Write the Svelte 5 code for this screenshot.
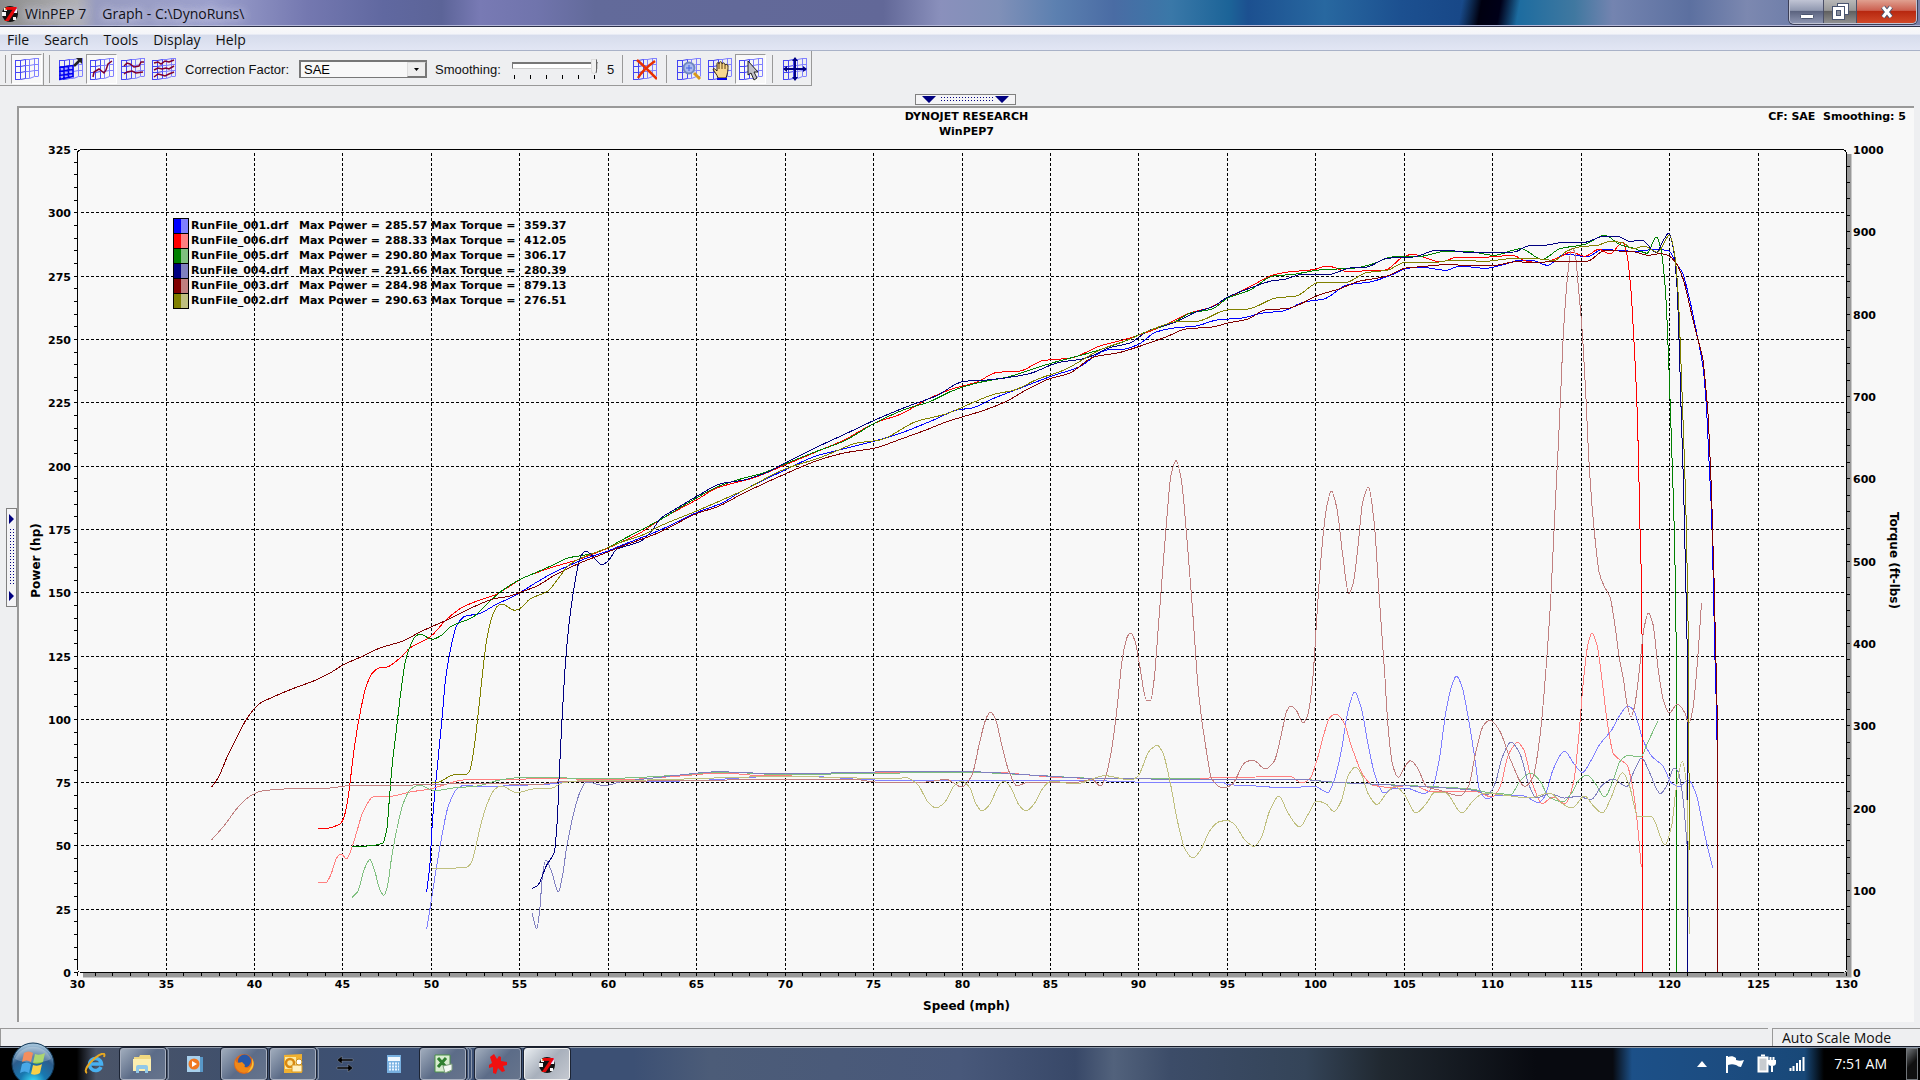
<script lang="ts">
  type Run = {
    file: string;
    power: string;
    torque: string;
    color: string;
    light: string;
    powerTrace: string;
    torqueTrace: string;
  };

  const menus = ['File', 'Search', 'Tools', 'Display', 'Help'];

  // traces are stored in the 1769 x 823 plot space that starts at 77,149
  const runs: Run[] = [
    {
      file: 'RunFile_001.drf',
      power: '285.57',
      torque: '359.37',
      color: '#0000ff',
      light: '#8080ff',
      powerTrace:
        '426.7,892 430,863 432.3,823 436.7,773 441.7,722 445.7,678 450,652 457,625 465.7,616 478,614 497,604 508,599 521,592 537,582 553,573 568,566 587,558 608,551 620,546 658,531 698,512 722,503 742,491 785,470 816,456 839,450 875,441 901,433 936,419 957,410 972,408 992,399 1018,389 1052,376 1079,367 1107,350 1125,349 1139,344 1156,332 1174,328 1196,326 1217,320 1242,318 1263,313 1283,311 1304,302 1324,299 1347,285 1370,282 1389,276 1406,268.7 1419,267 1446,270.3 1460,266 1485,268.3 1506,264 1521,260 1531,260 1547.5,265.3 1565,254 1587,256.7 1603,249.3 1617,250.3 1635,251.3 1656,249.3 1669,251 1676,263 1682.5,273 1688.6,295 1697.5,337 1703,367 1706.4,407 1709.3,467 1711.8,520 1713.6,597 1715,660 1717,740 1717.6,973',
      torqueTrace:
        '426.7,929 431.7,898 436,870 441.7,837 448,807 457,789 465,785 480,787 503,786 550,784 580,781 680,781 785,776 824,777 875,780 926,780 997,781 1079,780 1135,782 1222,782 1228,784.6 1256,786 1288,788 1314,786 1328,792.5 1334.6,779 1341.3,751 1348,711 1354.6,692 1361.3,708 1368,744 1374.7,774 1383.7,793 1395,788 1406,788 1424,793.6 1433,786 1439.5,758 1446,711 1452,685 1456.4,676 1461.8,686 1468.5,719 1475.2,761 1479.6,790 1487,799 1497,795 1524,796 1538,802.5 1544.4,797 1553.3,769 1564.5,751 1573.4,763 1582.3,772.5 1591.3,760 1600,744 1611,731 1620,715 1628,706 1634,711 1643,740 1651.5,756 1663,766 1671.6,783 1679.6,786.4 1688.6,780 1696,794 1705,836 1712.7,867.5'
    },
    {
      file: 'RunFile_006.drf',
      power: '288.33',
      torque: '412.05',
      color: '#ff0000',
      light: '#ff8080',
      powerTrace:
        '318,828.5 325,828.5 340,824 343.3,819 347.3,803 350.7,777 355,743 360.7,710 365.7,688 371.7,674 379,668 387,667 400,658 410,648 430,637 447,619 463,607 480,600 495,595 510,586 521,579 533,574 553,567 577,560 608,548 620,542.6 640,533 658,521 698,499 717,488 753,478 785,465 816,452 844,440 875,423 901,414 926,400 952,389 977,382 997,372.4 1020,371 1043,360.6 1071,358 1100,346 1130,338 1161,327 1191,312.5 1209,308 1228,298 1253,285 1273,275 1288,272 1314,269.6 1327,266 1349.6,272 1370,270.3 1385,270 1403,257 1412.5,254.3 1424,257.3 1440.4,262 1458,257 1489,257 1512,255.3 1526,261 1540,262.7 1560,257 1570.7,252 1585,256.3 1599,249.3 1610,254 1623,242 1627,255 1630.7,287 1633.9,340 1636.8,400 1638.6,460 1639.6,513 1641.4,580 1642.3,660 1642.7,973',
      torqueTrace:
        '318,882.7 325.7,882.7 330.7,875 336.7,858 340.7,854 346.7,858.7 351.7,848 356.7,832 363,812 373,797 393,796 410,792 430,789 447,784 463,780 513,779.5 547,778.3 613,780 680,776 722,773 763,775.7 865,772.3 972,772 997,772.4 1059,777.5 1140,779 1256,777 1290,776.4 1302,783 1310,778.6 1316.7,761 1323.4,736 1330,717.5 1336,714 1342.6,720 1352.4,749 1363.6,776 1372.5,785 1390,787.5 1413,785 1430.5,791.4 1475,791.4 1491.7,797 1499.7,788 1508.7,754 1517.6,742.5 1523.4,749 1533,785 1542,803.6 1553,797 1565.4,803.6 1573.4,783 1578.8,736 1583.2,683 1588,644 1592,633 1597,645 1602.4,683 1607.8,726 1613.6,754 1620.3,760 1627,765 1632.8,788 1637.2,822 1641.3,867.5'
    },
    {
      file: 'RunFile_005.drf',
      power: '290.80',
      torque: '306.17',
      color: '#008000',
      light: '#80c080',
      powerTrace:
        '352,846.7 372,845.7 382.7,843 386.7,830 389.3,800 392,767 396.7,727 400.7,693 405.7,660 410.7,645 415,637 420,634 432,639.3 442,635 450,627 473,617 490,601 503,590 521,579 535,573 553,565 568,558 590,554 608,547.7 620,541 658,521 698,497 717,487 737,480 763,473 785,464 816,451.6 844,441 875,423 906,409 929,402 952,391 977,383 1008,377 1028,370.6 1052,363 1089,353 1120,343 1151,330 1171,323.6 1191,313 1212,309 1228,298 1250,290 1273,276 1293,274.4 1319,270 1355,268 1372.5,264 1392,257 1421,256.3 1446,251.3 1467,251.3 1494,255.3 1521,248.7 1542,259.3 1560,248.7 1585,244.3 1604.6,235.3 1620.7,245 1635,248.7 1647,253.3 1656.4,237 1660.7,248 1665.4,290 1668.9,367 1671.4,440 1674.3,533 1676.3,660 1676.7,973',
      torqueTrace:
        '352,897.7 358,891 364,870 370,859.7 375,872 380,890 384,895.3 387.3,887 391.7,857 396.7,830 402.7,805 410,790 419,785 435,790.7 453,788 477,786 500,780 520,777.7 557,777.7 590,779 647,777 680,775 722,772 780,774.5 900,773 972,772.5 1030,775 1100,778.5 1200,779 1300,779 1328,782 1404,785.4 1439,787 1471,789 1488,792.5 1511,794.3 1520,781 1531,773 1540,781 1549,797 1563,802 1571,794 1580,779 1587,775 1596,784.6 1604.6,797 1613.6,779 1620.3,761 1628,755.4 1641,757 1647,744 1658,721'
    },
    {
      file: 'RunFile_004.drf',
      power: '291.66',
      torque: '280.39',
      color: '#000080',
      light: '#8080c0',
      powerTrace:
        '532,888.7 538,885 546.7,865 554.3,852 557.3,820 559.3,773 562,720 565.7,660 570.7,610 575.7,578 580,558 585.7,551 591.7,555 601.7,564.7 608,561 617,549 630,545 641,541 650.6,532.6 661,518 674,510 698,495.6 722,483.4 742,480.4 768,472 785,463 816,447.5 844,434.6 875,420 906,407 936,396 964,381.3 987,380 1028,374 1059,362.4 1084,358.7 1110,347.6 1130,343 1148,331 1176,322 1196,312 1212,307 1228,297 1253,287 1273,280.7 1283,279.6 1304,274 1329,274.4 1350,268 1367,267 1387,258.3 1413.6,257 1437,250.3 1451,250.7 1474,253 1492,252.3 1514,252 1528,246 1547,245 1563.6,242.3 1581,243 1606,236 1619,236.7 1629.6,241.3 1642,240.3 1656.4,252.7 1663.6,240 1669,233 1673.2,248 1677,287 1679.3,347 1681.4,420 1683.6,487 1685.7,580 1687.3,660 1687.8,973',
      torqueTrace:
        '532,913 536.7,929 540,907 542.3,877 545.7,860 551.7,872 558.3,892 562.3,877 566.7,847 573.3,815 580,792 586.7,782 605,785.7 620,782 653,778 680,775 717,771.8 785,774 875,772 972,771.8 1030,775 1100,778.7 1200,779.3 1300,779.5 1332,782 1404,785.7 1475,790.4 1487.7,794.6 1495.3,783 1502,758 1511,742 1520,754 1529,785 1536,798 1550,793.6 1564.5,798 1578,796.4 1591,799.6 1602.4,785 1612.7,779 1627,786.4 1633.7,772 1641.7,758 1649.3,772 1660.4,793.6 1668,783 1673.8,768 1678.3,772 1682.8,797 1688,856'
    },
    {
      file: 'RunFile_003.drf',
      power: '284.98',
      torque: '879.13',
      color: '#800000',
      light: '#c08080',
      powerTrace:
        '211.7,787 218,778 228,755 237,737 246,720 254,709 259,704 273,697 292,689 316,680 330,673 343,665 363,656 380,648 403,641 420,632 431,627 447,620 463,612 480,604 493,599 510,596 521,592 537,586 555,575 580,563 608,552 620,547 658,533 698,513 717,507 742,494 785,474 819,460 844,453 875,448 901,439 926,430 946,422 962,417 982,411 1005,402 1028,389 1049,379 1069,373.5 1094,357 1120,352.4 1139,346.5 1166,337 1186,329 1212,327 1228,323 1248,319 1265,310 1288,308.4 1319,295 1339,289 1360,281 1374,278.7 1387,276 1406,268 1421,266.7 1446,264.7 1467,265.3 1492,265.7 1517,261.7 1531,262.7 1560,261.3 1587,261.3 1604.6,250.7 1635,252 1647.5,255.3 1660,253.7 1668,255.3 1676,263 1683.2,279 1690.4,309 1697.5,338 1703,360 1705.7,387 1708.2,417 1710,457 1711.8,500 1712.9,543 1714.3,587 1715.4,640 1716.7,690 1717.5,740 1717.9,973',
      torqueTrace:
        '211.7,839.7 223,827 240,805 251.7,795 263,790.7 295,788.7 320,788.7 355,785.3 413,785 447,784 480,783.3 537,784.7 557,782 580,781 647,781 785,779.4 855,779.4 875,782 926,782 946,779.4 962,787 972,775 979.7,742 986.3,718 990.4,712 995,718 1002.7,749 1008.8,771 1017,786 1028,782 1079,782 1092,779.4 1100.6,786 1107.2,771 1112.3,745 1117.4,705 1122.6,657 1127.7,636 1130.7,633 1135.3,642 1139.4,664 1146.5,700 1150.6,700 1154.2,679 1158.3,627 1162.3,575 1167,516 1171,475 1176,460.5 1181.2,479 1186.3,531 1192.4,608 1199,697 1206.7,753 1211.8,779 1223,788 1232,784.6 1245,762.5 1253,760 1265.4,769 1274.3,761 1281,736 1286.8,711 1290.8,706 1296.6,711 1303.3,723 1308.2,713 1313,676 1316.7,619 1321,558 1326.5,508 1331.4,491 1336.8,508 1342.6,554 1348.8,593.6 1353.3,583 1358.2,544 1362.7,502 1368.5,487 1374.3,524 1379.2,597 1384.6,672 1388,726 1392.6,765 1398.4,777.5 1404.6,767 1410.4,760.7 1417,767 1427,787 1439,790 1460,795.7 1468.5,786 1476,751 1483.2,726 1490,720 1499.7,731 1511,761 1525,786.4 1533,777 1540,736 1546.6,661 1551,594 1554.6,518 1558.2,447 1560.7,393 1563.6,330 1567.9,273 1571.8,248 1575,253 1578.6,290 1582.1,330 1585.7,393 1589.3,467 1593.9,527 1599.3,573 1604.6,587 1610,597 1614.6,623 1619.6,660 1623.4,679 1627,704 1631,717 1634.6,706 1639.5,669 1643.9,629 1648.4,613 1652.9,624 1658.2,669 1663.6,701 1669.4,713 1677.4,704 1685,713 1689,723 1693,708 1697.5,661 1701.5,603'
    },
    {
      file: 'RunFile_002.drf',
      power: '290.63',
      torque: '276.51',
      color: '#808000',
      light: '#c0c080',
      powerTrace:
        '432,782.7 438,782.3 453,775 466.7,774 470,770 473.3,753 476.7,727 480,697 484,660 486.7,640 491.7,618 496.7,607 501.7,604 515,610.3 521,607.7 530,599 548,591 558,579 568,566 577,560 608,547.7 620,542.6 645,534 658,527 698,510.4 742,491 785,469 819,458 834,452 857,443 880,440 916,421.6 946,414 972,403 995,394 1013,390.5 1038,379 1064,370 1100,350 1130,339 1151,330 1179,321.4 1196,321.4 1227,310 1248,309 1276,298 1296,296 1319,282.5 1344,283 1367,272.5 1387,270.3 1406,262 1431,263 1453,260 1485,261.3 1506,259 1528,258 1554.6,260.3 1567,251 1581,246.7 1597.5,245.3 1610,241.3 1622.5,242.7 1633,248.7 1644,246.3 1657.5,252.3 1669.6,235.3 1674.3,252 1677.9,290 1680.4,347 1683,420 1685.7,500 1687.8,600 1688.8,700 1689.2,850',
      torqueTrace:
        '432,868.3 447,868.3 466.7,867 471.7,862 475.7,847 480,828 486.7,805 495,789 501.7,786 516.7,792.7 533,789 552,788 562,783 577,781 647,780 785,776.5 840,777.5 895,779 906,777.5 918,785 928,802 936,808 945,802 954,786 962,781 970,788 976,804 982,811 990,804 998,787 1004,781 1011,788 1019,805 1026,811 1034,804 1043,788 1051,781 1075.6,784 1104.6,775.7 1131,780 1138,776 1149.3,751 1157.3,745.4 1162.7,752.5 1170.7,785 1177,819 1185,849 1192.6,858 1200.6,850 1209.6,831 1218.5,822 1227.4,820.4 1234,824 1245,840 1254,846.4 1261,838 1270,810 1279,796 1288,813 1299.7,827 1307.8,815 1316.7,801 1325.6,803.6 1334,811.4 1341.3,801 1348,776 1355.5,767 1361.3,774 1368,793.6 1377,804.6 1386,794 1395,786.4 1404,794 1415.8,813 1426,804 1435,792 1446,793 1461.8,813 1473,801 1484,793 1506,795.4 1529,798 1549.7,793 1562,803.6 1572,808 1584.6,796 1593.5,806 1602.4,813 1611.3,797 1622.5,772.5 1629.2,785 1638,816.8 1651.5,816.8 1665,844.6 1671.6,826 1676,790 1682.3,761.4 1686.3,783 1688.2,850 1689.2,934'
    }
  ];

  // monotone cubic through the samples, so flat tops never overshoot
  function trace(samples: string) {
    const p = samples.split(' ').map((s) => s.split(',').map(Number));
    const slope = p.slice(1).map((q, i) => (q[1] - p[i][1]) / (q[0] - p[i][0]));
    const tangent = p.map((_, i) => {
      const a = slope[i - 1];
      const b = slope[i];
      if (a === undefined) return b;
      if (b === undefined) return a;
      return a * b <= 0 ? 0 : (2 * a * b) / (a + b);
    });
    let d = `M${p[0][0]} ${p[0][1]}`;
    for (let i = 1; i < p.length; i++) {
      const [x0, y0] = p[i - 1];
      const [x1, y1] = p[i];
      const h = (x1 - x0) / 3;
      d += `C${x0 + h} ${y0 + tangent[i - 1] * h} ${x1 - h} ${y1 - tangent[i] * h} ${x1} ${y1}`;
    }
    return d;
  }

  const range = (from: number, to: number, step: number) =>
    Array.from({ length: Math.floor((to - from) / step) + 1 }, (_, i) => from + i * step);

  const left = 58;
  const top = 10;
  let width = $state(1895);
  let height = $state(883);
  let plotW = $derived(Math.max(width - left - 68, 100));
  let plotH = $derived(Math.max(height - top - 50, 100));

  // centre hairlines on a whole pixel
  const snap = (n: number) => Math.floor(n + 0.6) + 0.5;
  let sx = $derived((mph: number) => snap(left + ((mph - 30) / 100) * plotW));
  let sy = $derived((hp: number) => snap(top + (1 - hp / 325) * plotH));
  let sty = $derived((tq: number) => snap(top + (1 - tq / 1000) * plotH));

  let correction = $state('SAE');
  let smoothing = $state(5);
</script>

{#snippet logo(size: number)}
  <svg class="logo" width={size} height={size} viewBox="0 0 20 20" aria-hidden="true">
    <circle cx="10" cy="11" r="8" fill="#111" />
    <path d="M2 9h4v4H2zM14 6h3v4h-3zM13 14h3v3h-3zM4 5h3v3H4z" fill="#f4f4f4" />
    <text x="3" y="18">7</text>
  </svg>
{/snippet}

{#snippet mesh()}
  <g fill="none" stroke-width="1">
    <path d="M.5 3v20M5.5 3v19M10.5 2v20M.5 3.5h5l5-1M.5 9.5h5l5-1M.5 15.5h5l5-1M.5 22.5h5l5-1" stroke="#4444f4" />
    <path d="M14.5 2v19M19.5 1v18M23.5 1v18M10.5 2.5h4l5-1h4M10.5 8.5h4l5-1h4M10.5 14.5h4l5-1h4M10.5 21.5h4l5-2h4" stroke="#8080ff" />
  </g>
{/snippet}

<div class="window">
  <header class="titlebar">
    {@render logo(20)}
    <span class="caption">WinPEP 7</span>
    <span class="caption path">Graph - C:\DynoRuns\</span>
    <div class="controls">
      <button class="ctl min" aria-label="Minimize">
        <svg width="14" height="14" viewBox="0 0 14 14"><rect x=".5" y="9.5" width="13" height="4" rx="1" fill="#fff" stroke="#4a5570" /></svg>
      </button>
      <button class="ctl max" aria-label="Restore">
        <svg width="17" height="17" viewBox="0 0 17 17" fill="#fff" stroke="#4a5570">
          <rect x="5.5" y=".5" width="11" height="11" />
          <rect x=".5" y="3.5" width="12" height="13" />
          <rect x="4.5" y="7.5" width="4" height="5" fill="#8a8f9c" />
        </svg>
      </button>
      <button class="ctl close" aria-label="Close">
        <svg width="16" height="14" viewBox="0 0 16 14" fill="none">
          <path d="M4 2l8 10M12 2L4 12" stroke="#4a5570" stroke-width="5" />
          <path d="M4 2l8 10M12 2L4 12" stroke="#fff" stroke-width="3" />
        </svg>
      </button>
    </div>
  </header>

  <nav class="menubar">
    {#each menus as menu}
      <button>{menu}</button>
    {/each}
  </nav>

  <div class="rebar">
    <div class="toolbar">
      <span class="bar first"></span>
      <button class="tool pressed" aria-label="Grid">
        <svg width="24" height="24" viewBox="0 0 24 24">{@render mesh()}</svg>
      </button>
      <span class="bar edge"></span>
      <span class="bar grab"></span>
      <button class="tool" aria-label="Export graph">
        <svg width="24" height="24" viewBox="0 0 24 24">
          {@render mesh()}
          <path d="M.5 10.5l14-2v11l-5 2-9 2z" fill="#a8a8ff" />
          <path d="M1 10v13M5 10v13M9.5 9v12M14 8v12M0 10.5l14-2M0 14.5l14-2M0 18.5l14-2M0 22.5l14-3" stroke="#0000f0" stroke-width="1.5" fill="none" />
          <path d="M15 9l6-6" stroke="#222" stroke-width="2.5" />
          <path d="M17 1h6v6z" fill="#222" />
        </svg>
      </button>
      <button class="tool pressed" aria-label="Single plot">
        <svg width="24" height="24" viewBox="0 0 24 24">
          {@render mesh()}
          <path d="M3 20l1-5 5-3 5 4 2-3 2-6 4-3" stroke="#800030" stroke-width="1.5" fill="none" />
        </svg>
      </button>
      <button class="tool" aria-label="Double plot">
        <svg width="24" height="24" viewBox="0 0 24 24">
          {@render mesh()}
          <path d="M3 9l3-3 3 1 4 3 5-1 2-4h3M3 17l3-2 5-1 4 2 7-1" stroke="#800030" stroke-width="1.5" fill="none" />
        </svg>
      </button>
      <button class="tool" aria-label="Triple plot">
        <svg width="24" height="24" viewBox="0 0 24 24">
          {@render mesh()}
          <path d="M2 6l4-1 3 2 4-3 4 1 5-2M2 13l4-2 4 1 4-1 3 1 5-3M2 20l4-3 4 1 3 1 4-2 5-2" stroke="#800030" stroke-width="1.5" fill="none" />
        </svg>
      </button>
      <label class="cf-label" for="cf">Correction Factor:</label>
      <div class="combo">
        <select id="cf" bind:value={correction}>
          <option>SAE</option>
          <option>STD</option>
          <option>DIN</option>
        </select>
        <span class="drop"><svg width="5" height="3" viewBox="0 0 5 3"><path d="M0 0h5L2.5 3z" /></svg></span>
      </div>
      <label class="sm-label" for="sm">Smoothing:</label>
      <div class="slider">
        <input id="sm" type="range" min="0" max="5" bind:value={smoothing} />
        <svg width="86" height="5" viewBox="0 0 86 5" aria-hidden="true">
          <path d="M2.5 0v4M18.5 0v4M34.5 0v4M50.5 0v4M66.5 0v4M82.5 0v4" stroke="#000" />
        </svg>
      </div>
      <output for="sm">{smoothing}</output>
      <span class="bar"></span>
      <button class="tool" aria-label="Clear graph">
        <svg width="24" height="24" viewBox="0 0 24 24">
          {@render mesh()}
          <path d="M4 3c6 5 13 12 20 19M22 4C15 9 9 14 5 21" stroke="#e83000" stroke-width="2.5" fill="none" />
        </svg>
      </button>
      <span class="bar"></span>
      <button class="tool" aria-label="Zoom">
        <svg width="24" height="24" viewBox="0 0 24 24">
          {@render mesh()}
          <circle cx="12" cy="11" r="5.5" fill="#a8b8f0" stroke="#7088c0" stroke-width="2" />
          <path d="M9 11h6M12 8v6" stroke="#4060e0" />
          <path d="M17 16l6 6" stroke="#d89818" stroke-width="3" />
        </svg>
      </button>
      <button class="tool" aria-label="Pan">
        <svg width="24" height="24" viewBox="0 0 24 24">
          {@render mesh()}
          <path d="M10 21c-1-4-4-6-5-9 1-1 2 0 4 2V7c0-2 2-2 2 0 0-3 3-3 3 0 1-2 3-1 3 1 1-1 3-1 3 1 0 4 0 6-2 12z" fill="#f8d890" stroke="#302010" />
          <path d="M11 7v5M14 7v5M17 8v4" stroke="#604010" />
          <path d="M9 22h10" stroke="#0000f0" stroke-width="2" />
        </svg>
      </button>
      <button class="tool pressed" aria-label="Select">
        <svg width="24" height="24" viewBox="0 0 24 24">
          {@render mesh()}
          <path d="M9 4v14l3-2 3 7 3-2-3-6h4z" fill="#c0c0c8" stroke="#222" />
        </svg>
      </button>
      <span class="bar"></span>
      <button class="tool" aria-label="Auto scale">
        <svg width="24" height="24" viewBox="0 0 24 24">
          {@render mesh()}
          <path d="M12 1v22M1 12h22" stroke="#000080" stroke-width="2" />
          <path d="M12 0l3 4H9zM12 24l3-4H9zM0 12l4-3v6zM24 12l-4-3v6z" fill="#000080" />
        </svg>
      </button>
    </div>
  </div>

  <main>
    <aside>
      <button class="grip side" aria-label="Show run list">
        <svg width="11" height="99" viewBox="0 0 11 99" aria-hidden="true">
          <path d="M3 6l5 5-5 5zM3 83l5 5-5 5z" fill="#000080" />
          <path d="M4.5 21v57M7.5 21v57" stroke="#000080" stroke-dasharray="1 2" />
        </svg>
      </button>
    </aside>
    <div class="top-strip">
      <button class="grip" aria-label="Show options">
        <svg width="99" height="11" viewBox="0 0 99 11" aria-hidden="true">
          <path d="M6 2h14l-7 7zM79 2h14l-7 7z" fill="#000080" />
          <path d="M25 3.5h53M25 6.5h53" stroke="#000080" stroke-dasharray="1 2" />
        </svg>
      </button>
    </div>

    <section class="panel">
      <div class="heading">
        <div class="names">
          <div>DYNOJET RESEARCH</div>
          <div>WinPEP7</div>
        </div>
        <div class="settings">CF: {correction}  Smoothing: {smoothing}</div>
      </div>
      <div class="chart" bind:clientWidth={width} bind:clientHeight={height}>
        <svg {width} {height} role="img" aria-label="Power and torque against speed">
          <path d="M{left + 6} {top + plotH + 3}H{left + plotW + 3}V{top + 5}" class="shadow" />
          <rect x={left + 0.5} y={top + 0.5} width={plotW} height={plotH} rx="4" class="frame" />

          <g class="grid">
            {#each range(35, 125, 5) as mph}
              <path d="M{sx(mph)} {top + 4}V{top + plotH - 2}" />
            {/each}
            {#each range(25, 300, 25) as hp}
              <path d="M{left + 4} {sy(hp)}H{left + plotW - 2}" />
            {/each}
          </g>

          <g class="ticks">
            {#each range(0, 325, 5) as hp}
              <path d="M{left - 3} {sy(hp)}h3" />
            {/each}
            {#each range(30, 130, 1) as mph}
              <path d="M{sx(mph)} {top + plotH}v4" />
            {/each}
            {#each range(20, 980, 20) as tq}
              <path d="M{left + plotW} {sty(tq)}h4" />
            {/each}
          </g>

          <g class="labels">
            {#each range(0, 325, 25) as hp}
              <text x={left - 6} y={sy(hp) + 4} text-anchor="end">{hp}</text>
            {/each}
            {#each range(30, 130, 5) as mph}
              <text x={sx(mph)} y={top + plotH + 16} text-anchor="middle">{mph}</text>
            {/each}
            {#each range(0, 1000, 100) as tq}
              <text x={left + plotW + 7} y={sty(tq) + 4}>{tq}</text>
            {/each}
          </g>

          <g class="titles">
            <text x={left + plotW / 2 + 5} y={top + plotH + 38}>Speed (mph)</text>
            <text transform="translate(21 {top + plotH / 2}) rotate(-90)">Power (hp)</text>
            <text transform="translate({left + plotW + 44} {top + plotH / 2}) rotate(90)">Torque (ft-lbs)</text>
          </g>

          <g class="legend">
            {#each runs as run, i}
              <rect x={left + 96} y={top + 69 + i * 15} width="8" height="15" fill={run.color} />
              <rect x={left + 104} y={top + 69 + i * 15} width="7" height="15" fill={run.light} />
              <rect x={left + 96.5} y={top + 69.5 + i * 15} width="15" height="15" class="swatch" />
              <text y={top + 80 + i * 15}>
                <tspan x={left + 114}>{run.file}</tspan>
                <tspan x={left + 222}>Max Power =</tspan>
                <tspan x={left + 308}>{run.power}</tspan>
                <tspan x={left + 354}>Max Torque =</tspan>
                <tspan x={left + 447}>{run.torque}</tspan>
              </text>
            {/each}
          </g>

          <svg x={left} y={top} width={plotW} height={plotH} viewBox="77 149 1769 823" preserveAspectRatio="none">
            {#each runs as run}
              <path d={trace(run.torqueTrace)} stroke={run.light} class="trace" />
              <path d={trace(run.powerTrace)} stroke={run.color} class="trace" />
            {/each}
          </svg>
        </svg>
      </div>
    </section>
  </main>

  <footer class="status">
    <div class="pane wide"></div>
    <div class="pane mode">Auto Scale Mode</div>
  </footer>

  <div class="taskbar">
    <button class="orb" aria-label="Start">
      <svg width="44" height="44" viewBox="0 0 44 44">
        <defs>
          <radialGradient id="orb" cx=".5" cy=".95" r=".9">
            <stop offset="0" stop-color="#40e8ff" />
            <stop offset=".35" stop-color="#1878b0" />
            <stop offset=".7" stop-color="#2c5c8c" />
            <stop offset="1" stop-color="#a0c0d8" />
          </radialGradient>
        </defs>
        <circle cx="22" cy="22" r="21" fill="url(#orb)" stroke="#103858" />
        <path d="M13 11c3-2 6-2 9 0l-2 9c-3-2-6-2-9 0z" fill="#f06828" />
        <path d="M24 12c3 1 6 1 10-1l-2 9c-4 2-7 2-10 1z" fill="#90c840" />
        <path d="M11 22c3-2 6-2 9 0l-2 9c-3-2-6-2-9 0z" fill="#48a8e8" />
        <path d="M22 23c3 1 6 1 9-1l-2 9c-3 2-6 2-9 1z" fill="#f8d048" />
        <path d="M4 17a19 18 0 0 1 36 0c-10 5-26 5-36 0z" fill="#fff" opacity=".25" />
      </svg>
    </button>

    <div class="tasks">
      <button class="task plain ie" aria-label="Internet Explorer">
        <svg width="22" height="22" viewBox="0 0 22 22" fill="none">
          <path d="M17 14a6 6 0 1 1 .5-3H7" stroke="#48b0f0" stroke-width="3.5" />
          <path d="M3 20c-4-2 2-10 8-15s11-6 9-1" stroke="#e8a820" stroke-width="2" />
        </svg>
      </button>
      <button class="task" aria-label="Windows Explorer">
        <svg width="22" height="22" viewBox="0 0 22 22">
          <path d="M2 4h5l1-2h10l1 3v13H2z" fill="#f0d880" />
          <path d="M1 6h18v12H1z" fill="#fbeeb0" />
          <path d="M4 20v-6q0-2 2-2h8q2 0 2 2v6h-3v-4H7v4z" fill="#90c8e8" />
        </svg>
      </button>
      <span class="stack"></span>
      <button class="task plain" aria-label="Media Player">
        <svg width="20" height="20" viewBox="0 0 20 20">
          <path d="M4 3h14v15H4z" fill="#5898c8" />
          <path d="M2 2h13v16H2z" fill="#a8d0ec" />
          <circle cx="9" cy="10" r="5.5" fill="#f07820" />
          <path d="M7 7l5 3-5 3z" fill="#fff" />
        </svg>
      </button>
      <button class="task" aria-label="Firefox">
        <svg width="22" height="22" viewBox="0 0 22 22">
          <circle cx="11" cy="11" r="10" fill="#e06818" />
          <circle cx="11.5" cy="8" r="6.5" fill="#2858a8" />
          <path d="M2 6c1 5 4 4 7 3l3 3c-2 3 3 4 6 1 1 5-5 8-10 6S1 13 2 6z" fill="#f08818" />
          <path d="M19 5c3 5 2 12-5 15 4-4 6-9 5-15z" fill="#f8c838" />
        </svg>
      </button>
      <button class="task" aria-label="Outlook">
        <svg width="22" height="22" viewBox="0 0 22 22">
          <path d="M2 2l18-1v19H2z" fill="#f0b030" />
          <rect x="3" y="4" width="11" height="12" fill="#fce8a0" />
          <circle cx="8" cy="10" r="4" fill="none" stroke="#d88810" stroke-width="2.5" />
          <path d="M10 12h10v7H10z" fill="#fff0c0" stroke="#d89820" />
          <circle cx="17" cy="9" r="3" fill="#fff" stroke="#c89020" />
        </svg>
      </button>
      <span class="stack"></span>
      <button class="task plain" aria-label="Transfer">
        <svg width="18" height="18" viewBox="0 0 18 18">
          <path d="M17 4H6V1L1 5l5 4V6h11zM1 12h11V9l5 4-5 4v-3H1z" fill="#000" stroke="#8890a0" stroke-width=".5" />
        </svg>
      </button>
      <button class="task plain" aria-label="Calculator">
        <svg width="18" height="20" viewBox="0 0 18 20">
          <rect x="2" y="1" width="14" height="18" fill="#78b0e0" />
          <rect x="3" y="3" width="12" height="4" fill="#f0f8ff" />
          <path d="M4 9.5h10M4 12.5h10M4 15.5h10" stroke="#e8f4ff" stroke-width="2" stroke-dasharray="2 1" />
        </svg>
      </button>
      <button class="task" aria-label="Excel">
        <svg width="22" height="22" viewBox="0 0 22 22">
          <path d="M3 2h15v17H3z" fill="#d8ecd0" stroke="#4a9048" />
          <path d="M6 5l8 9M14 5l-8 9" stroke="#308030" stroke-width="3" />
          <path d="M11 13l9-2v6l-7 3z" fill="#f4f8f4" stroke="#80a080" />
        </svg>
      </button>
      <span class="stack"></span>
      <span class="stack"></span>
      <button class="task" aria-label="Dynojet">
        <svg width="22" height="22" viewBox="0 0 22 22">
          <path d="M3 4l4-3 3 5 2-3 2 1v4l6 1v3l-4 1 2 5-3 1-4-4-2 6-3-1v-6l-4 1v-3l3-2z" fill="#f01010" />
        </svg>
      </button>
      <button class="task active" aria-label="WinPEP 7">{@render logo(20)}</button>
    </div>

    <div class="tray">
      <button aria-label="Show hidden icons"><svg width="10" height="6" viewBox="0 0 10 6"><path d="M0 6l5-6 5 6z" fill="#fff" /></svg></button>
      <button aria-label="Action Center">
        <svg width="18" height="18" viewBox="0 0 18 18"><path d="M1 1v17" stroke="#fff" stroke-width="2" /><path d="M2 2c3-1 5-1 8 1v2c3 1 5 1 8 0l-3 7c-2 0-3-1-5-2-3-1-5-1-8 0z" fill="#fff" /></svg>
      </button>
      <button aria-label="Power">
        <svg width="19" height="19" viewBox="0 0 19 19" fill="none" stroke="#fff">
          <path d="M1.5 3.5h9v14h-9z" stroke-width="2" fill="#c8ccd0" />
          <path d="M4 1.5h4M13.5 3v3M16.5 3v3" stroke-width="2" />
          <path d="M11 6h8v3q0 3-4 3-4 0-4-3z" fill="#fff" stroke="none" />
          <path d="M15 12v6" stroke-width="2" />
        </svg>
      </button>
      <button aria-label="Network">
        <svg width="16" height="14" viewBox="0 0 16 14" stroke="#fff" stroke-width="2"><path d="M1.5 14v-3M4.5 14V9M8 14V6M11 14V3M14.5 14V0" /></svg>
      </button>
      <time>7:51 AM</time>
      <button class="desktop" aria-label="Show desktop"></button>
    </div>
  </div>
</div>

<style>
  :global(body) {
    margin: 0;
    background: #eeeff1;
  }

  .window {
    display: flex;
    flex-direction: column;
    height: 100vh;
    min-height: 640px;
    font-family: 'Open Sans', 'Noto Sans', sans-serif;
    font-size: 14px;
    color: #111;
    background: #eeeff1;
  }

  button {
    font: inherit;
    color: inherit;
    padding: 0;
    border: none;
    background: none;
    display: flex;
    align-items: center;
    justify-content: center;
  }

  svg {
    display: block;
    flex: none;
  }

  .logo {
    overflow: visible;
  }

  .logo text {
    font-family: 'DejaVu Sans', Verdana, sans-serif;
    font-size: 20px;
    font-weight: bold;
    font-style: italic;
    fill: #e80808;
  }

  .titlebar {
    display: flex;
    align-items: center;
    flex: none;
    height: 27px;
    box-sizing: border-box;
    border-bottom: 1px solid #2c3048;
    box-shadow: inset 0 -1px #b4b8d8;
    background:
      linear-gradient(100deg, transparent 76%, #000010 77%, #000018 78%, transparent 79%),
      linear-gradient(90deg, #8c8c8c 0, #b0b0b4 4%, #989cc0 5%, #9ca0cc 11%, #7478b0 16%, #6068a0 20%, #5c6498 23%, #787ab4 25%, #7074ac 28%, #626a9a 31%, #626898 46%, #8a90bc 49%, #8090b8 52%, #5c80b0 55%, #4a6ca4 58%, #3a78a8 61%, #1c6498 64%, #1c5090 65%, #2868a0 69%, #1c5090 73%, #184888 76%, #1c6ca0 79%, #4078a0 82%, #7484b0 84%, #5c70a0 88%, #7c88b0 91%, #6c7ca8 94%, #7880a8 100%);
  }

  .caption {
    margin-left: 5px;
    color: #101018;
    text-shadow: 0 0 8px #d0d0e8, 0 0 8px #d0d0e8;
  }

  .path {
    margin-left: 16px;
  }

  .controls {
    display: flex;
    align-self: flex-start;
    height: 23px;
    margin-left: auto;
    margin-right: 3px;
    border: 1px solid #c0c4d4;
    border-top: none;
    border-radius: 0 0 5px 5px;
    overflow: hidden;
    box-shadow: 0 0 0 1px #3c4058;
  }

  .ctl {
    width: 34px;
    background: linear-gradient(#c0c4d4 0, #9098b0 45%, #5c6480 50%, #8c94b0 100%);
    border-right: 1px solid #4c5068;
  }

  .max {
    width: 33px;
    background: linear-gradient(#b8b8b8 0, #989898 45%, #606060 50%, #909090 100%);
  }

  .close {
    width: 59px;
    border-right: none;
    background: linear-gradient(#e0a090 0, #cc6050 45%, #b82810 50%, #d04828 100%);
  }

  .menubar {
    display: flex;
    flex: none;
    gap: 1px;
    height: 24px;
    box-sizing: border-box;
    padding-top: 2px;
    border-bottom: 1px solid #a9b2c8;
    background: linear-gradient(#f8f8f8 0, #f4f5f9 30%, #d6dcec 36%, #e2e6f4 100%);
  }

  .menubar button {
    padding: 0 7px;
  }

  .rebar {
    display: flex;
    flex: none;
    height: 35px;
  }

  .toolbar {
    display: flex;
    align-items: center;
    padding: 2px 1px 0 5px;
    border-right: 1px solid #999;
    border-bottom: 1px solid #999;
    font-family: 'Liberation Sans', Arial, sans-serif;
    font-size: 13px;
  }

  .bar {
    width: 1px;
    height: 28px;
    margin: 0 6px;
    background: #999;
  }

  .bar.first {
    margin: 0 5px 0 0;
  }

  .bar.edge {
    height: 32px;
    margin: 0 0 0 1px;
  }

  .bar.grab {
    margin: 0 5px;
  }

  .tool {
    width: 31px;
    height: 30px;
    box-sizing: border-box;
    border: 1px solid transparent;
  }

  .pressed {
    border-color: #999 #fff #fff #999;
    background: #f8f8f8;
  }

  .cf-label {
    width: 114px;
    margin-left: 6px;
  }

  .combo {
    display: grid;
    width: 128px;
    height: 18px;
    box-sizing: border-box;
    border: 1px solid #777;
    border-width: 2px 1px 1px 2px;
    background: #f8f8f8;
  }

  .combo > * {
    grid-area: 1 / 1;
  }

  select {
    appearance: none;
    min-width: 0;
    width: 100%;
    border: none;
    padding: 0 3px;
    font: inherit;
    color: #000;
    background: none;
  }

  .drop {
    display: flex;
    align-items: center;
    justify-content: center;
    justify-self: end;
    width: 19px;
    border: 1px solid #888;
    border-color: #ddd #777 #777 #ddd;
    box-sizing: border-box;
    background: #eee;
    pointer-events: none;
  }

  .sm-label {
    width: 77px;
    margin-left: 8px;
  }

  .slider {
    display: flex;
    flex-direction: column;
    gap: 2px;
    width: 86px;
  }

  input[type='range'] {
    appearance: none;
    width: 86px;
    height: 15px;
    margin: 0;
    background: none;
  }

  input[type='range']::-webkit-slider-runnable-track {
    height: 7px;
    box-sizing: border-box;
    border: 1px solid #ccc;
    border-top: 2px solid #777;
    border-left: 1px solid #777;
    background: #fff;
  }

  input[type='range']::-webkit-slider-thumb {
    appearance: none;
    width: 6px;
    height: 15px;
    margin-top: -5px;
    border: 1px solid #ddd;
    border-right: 1px solid #666;
    border-radius: 0 0 3px 3px;
    background: #f0f0f0;
  }

  output {
    width: 9px;
    margin-left: 9px;
  }

  main {
    flex: 1;
    min-height: 0;
    display: grid;
    grid-template-columns: 17px 1fr 6px;
    grid-template-rows: 20px 1fr 6px;
  }

  aside {
    grid-row: 1 / 4;
    display: flex;
    align-items: center;
    justify-content: flex-end;
  }

  .top-strip {
    display: flex;
    align-items: flex-end;
    justify-content: center;
    padding-bottom: 1px;
  }

  .grip {
    height: 11px;
    border: 1px solid #808080;
    box-sizing: border-box;
    background: #f4f4f6;
  }

  .grip.side {
    width: 11px;
    height: 99px;
  }

  .panel {
    grid-column: 2;
    grid-row: 2;
    display: flex;
    flex-direction: column;
    min-height: 0;
    border-top: 2px solid #999;
    border-left: 2px solid #999;
    background: #f8f8f8;
    font: bold 11px/15px 'DejaVu Sans', Verdana, sans-serif;
    color: #000;
  }

  .heading {
    display: grid;
    grid-template-columns: 1fr auto 1fr;
    padding-top: 1px;
  }

  .names {
    grid-column: 2;
    text-align: center;
  }

  .settings {
    justify-self: end;
    padding-right: 8px;
    white-space: pre;
  }

  .chart {
    flex: 1;
    min-height: 0;
    overflow: hidden;
  }

  .frame {
    fill: none;
    stroke: #000;
    shape-rendering: crispEdges;
  }

  .shadow {
    fill: none;
    stroke: #999;
    stroke-width: 5px;
  }

  .grid path {
    stroke: #000;
    stroke-dasharray: 3 2;
    shape-rendering: crispEdges;
  }

  .ticks path {
    stroke: #000;
    shape-rendering: crispEdges;
  }

  .titles text {
    font-size: 12px;
    text-anchor: middle;
  }

  .swatch {
    fill: none;
    stroke: #000;
    shape-rendering: crispEdges;
  }

  .trace {
    fill: none;
    stroke-width: 1px;
    vector-effect: non-scaling-stroke;
    shape-rendering: crispEdges;
  }

  .status {
    display: flex;
    flex: none;
    gap: 4px;
    height: 18px;
  }

  .pane {
    box-sizing: border-box;
    border-top: 1px solid #999;
    border-left: 1px solid #999;
    line-height: 17px;
  }

  .wide {
    flex: 1;
  }

  .mode {
    width: 148px;
    padding-left: 9px;
  }

  .taskbar {
    display: flex;
    align-items: center;
    flex: none;
    height: 34px;
    box-sizing: border-box;
    border-top: 1px solid #181c28;
    box-shadow: inset 0 1px #8c98a8;
    background: linear-gradient(90deg, #000 0, #000 4%, #4a5468 5%, #40506c 12%, #3c5074 20%, #3c5074 33%, #4c5c78 37%, #48587a 50%, #384868 56%, #52627c 58%, #3c4c68 61%, #344458 68%, #202830 72%, #080a10 80%, #080a10 84%, #1c5088 85%, #1c4c80 90%, #184878 94%, #000 95%, #000 100%);
  }

  .orb {
    margin: -6px 30px -6px 11px;
  }

  .tasks {
    display: flex;
    align-items: center;
    gap: 3px;
  }

  .task {
    width: 46px;
    height: 32px;
    box-sizing: border-box;
    border: 1px solid #a8b0c0;
    border-radius: 3px;
    background: linear-gradient(135deg, #a0acbc 0, #5c6c88 50%, #66748c 100%);
    box-shadow: 0 0 0 1px #1c2434;
  }

  .plain {
    border: none;
    background: none;
    box-shadow: none;
  }

  .ie {
    width: 20px;
    margin-right: 12px;
  }

  .active {
    border-color: #eee;
    background: linear-gradient(135deg, #e8ecf0 0, #a8b0bc 50%, #c4c8d0 100%);
  }

  .stack {
    width: 3px;
    height: 32px;
    margin-left: -3px;
    box-sizing: border-box;
    border: 1px solid #8c98ac;
    border-left: none;
    border-radius: 0 3px 3px 0;
  }

  .tray {
    display: flex;
    align-items: center;
    gap: 13px;
    height: 100%;
    margin-left: auto;
    color: #fff;
  }

  .tray button:first-child {
    margin-right: 6px;
  }

  time {
    margin: 0 6px 0 16px;
  }

  .desktop {
    width: 12px;
    height: 32px;
    margin-right: 2px;
    border: 1px solid #707478;
    background: linear-gradient(135deg, #707478 0, #101010 50%);
  }
</style>
